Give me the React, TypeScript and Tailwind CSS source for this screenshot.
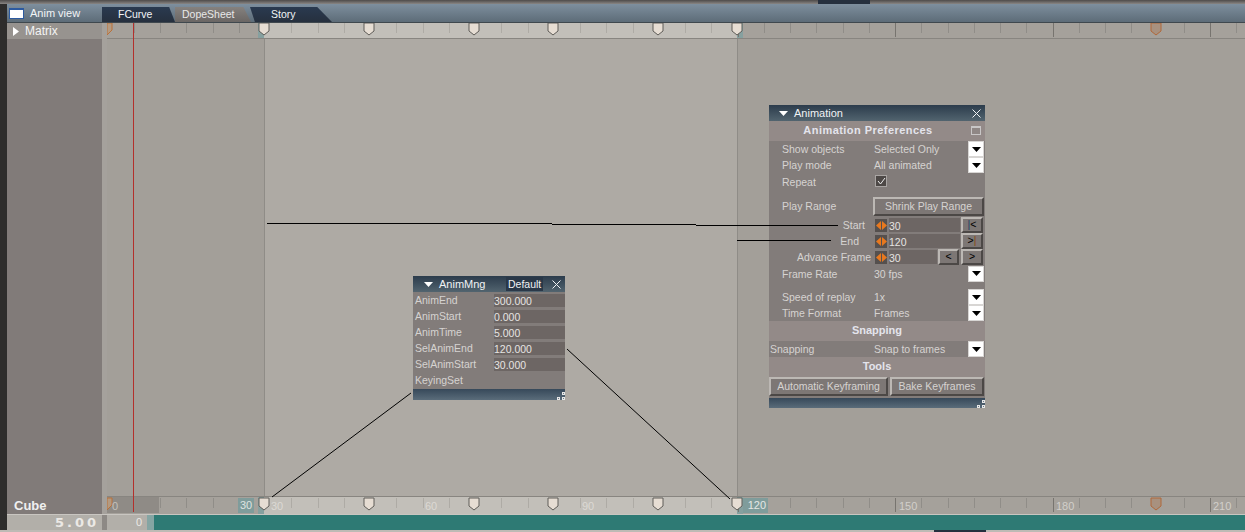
import React from "react";

const F = "[font-family:'Liberation_Sans',sans-serif]";

function Ruler({ bottom }: { bottom?: boolean }) {
  const ticks: number[] = [];
  for (let f = 5; f <= 225; f += 5) ticks.push(f);
  const keys = [264, 369, 474, 553, 658, 737];
  const X = (f: number) => Math.round(107.5 + 5.25 * f) - 107;
  const h = bottom ? 17 : 15;
  return (
    <div className={`relative flex shrink-0 ${bottom ? "h-[17px]" : "h-[15px]"}`}>
      <div className="w-[157px] bg-[#a5a19b]" />
      <div className="w-[473px] bg-[#c2bfb9]" />
      <div className="flex-1 bg-[#a5a19b]" />
      <svg className="absolute inset-0" width="1138" height={h} shapeRendering="crispEdges">
        {bottom && <rect x="0" y="0" width="52" height="16" fill="#8f8b86" />}
        <rect x="151" y="0" width="6" height={h} fill="#86a09f" />
        <rect x="630" y="0" width="6" height={h} fill="#86a09f" />
        {ticks.map((f) => {
          const inRange = f > 30 && f < 120;
          const major = f % 30 === 0 && !inRange;
          return (
            <line
              key={f}
              x1={X(f)}
              x2={X(f)}
              y1={bottom ? 1 : 0}
              y2={major && f > 30 ? (bottom ? 15 : 14) : bottom ? 11 : 10}
              stroke={inRange ? "#aeaba5" : major ? "#77746f" : "#908d88"}
            />
          );
        })}
        {keys.map((k) => (
          <path
            key={k}
            d={`M${k - 107 - 5} ${bottom ? 1 : 0}h10v8l-5 4l-5 -4z`}
            fill="#e6ddd3"
            stroke="#5f5c58"
            shapeRendering="auto"
          />
        ))}
        <path d={`M${1156 - 107 - 5} ${bottom ? 1 : 0}h10v8l-5 4l-5 -4z`} fill="#a8917f" stroke="#b0683a" shapeRendering="auto" />
        <path d={`M0 ${bottom ? 1 : 0}h5v7l-5 5z`} fill="#b49a80" stroke="#b8703a" shapeRendering="auto" />
      </svg>
      {bottom && (
        <>
          <span className="absolute left-[131px] top-[1px] w-[16px] h-[15px] bg-[#7f9c9b] text-center text-[#dfe3e0] text-[11px] leading-[15px]">30</span>
          <span className="absolute left-[5px] top-[2px] text-[#c4c0ba] text-[11px] leading-[15px]">0</span>
          <span className="absolute left-[164px] top-[2px] text-[#dcd9d4] text-[11px] leading-[15px]">30</span>
          <span className="absolute left-[318px] top-[2px] text-[#dcd9d4] text-[11px] leading-[15px]">60</span>
          <span className="absolute left-[475px] top-[2px] text-[#dcd9d4] text-[11px] leading-[15px]">90</span>
          <span className="absolute left-[636px] top-[1px] w-[25px] h-[15px] bg-[#7f9c9b] text-right pr-[2px] text-[#e4e7e4] text-[11px] leading-[15px]">120</span>
          <span className="absolute left-[792px] top-[2px] text-[#d2cfca] text-[11px] leading-[15px]">150</span>
          <span className="absolute left-[949px] top-[2px] text-[#d2cfca] text-[11px] leading-[15px]">180</span>
          <span className="absolute left-[1106px] top-[2px] text-[#d2cfca] text-[11px] leading-[15px]">210</span>
        </>
      )}
    </div>
  );
}

function Close() {
  return (
    <svg width="9" height="9" viewBox="0 0 9 9" className="shrink-0">
      <path d="M0.5 0.5L8.5 8.5M8.5 0.5L0.5 8.5" stroke="#f0f2f4" strokeWidth="1" />
    </svg>
  );
}

function Down({ color = "#fff" }: { color?: string }) {
  return (
    <svg width="9" height="5" viewBox="0 0 9 5" className="shrink-0">
      <path d="M0 0h9L4.5 5z" fill={color} />
    </svg>
  );
}

function Grip() {
  return (
    <svg width="8" height="8" viewBox="0 0 8 8" className="absolute right-0 bottom-0" shapeRendering="crispEdges">
      <path d="M5 0h3v3h-3zM0 5h3v3h-3zM5 5h3v3h-3z" fill="#e8e8e8" />
      <path d="M6 1h1v1h-1zM1 6h1v1h-1zM6 6h1v1h-1z" fill="#6a7a88" />
    </svg>
  );
}

function Drop() {
  return (
    <div className="w-[16px] h-[16px] bg-white border border-[#d8d6d4] flex items-center justify-center shrink-0">
      <Down color="#000" />
    </div>
  );
}

function Row({ label, value, drop, h = "h-[16px]", indent = "pl-[13px]" }: { label: string; value: string; drop?: boolean; h?: string; indent?: string }) {
  return (
    <div className={`flex items-center pr-[1px] ${h}`}>
      <span className={`w-[105px] shrink-0 pt-[2px] ${indent}`}>{label}</span>
      <span className="flex-1 pt-[2px]">{value}</span>
      {drop && <Drop />}
    </div>
  );
}

function Bevel({ className, children }: { className: string; children: React.ReactNode }) {
  return (
    <div
      className={`flex items-center justify-center border-2 border-t-[#bcb8b4] border-l-[#bcb8b4] border-b-[#4c4846] border-r-[#4c4846] bg-[#7d7775] text-[#d6d3d1] ${className}`}
    >
      {children}
    </div>
  );
}

function Spin({ label, value, fieldW, indentClass, children }: { label: string; value: string; fieldW: string; indentClass: string; children: React.ReactNode }) {
  return (
    <div className="flex items-center h-[16px]">
      <span className={`w-[106px] shrink-0 text-right pt-[2px] ${indentClass}`}>{label}</span>
      <div className="w-[12px] h-[13px] bg-[#55504e] flex items-center justify-center gap-[1px] shrink-0">
        <svg width="11" height="9" viewBox="0 0 11 9">
          <path d="M5 0v9L0 4.5zM6 0v9l5-4.5z" fill="#e8781e" />
        </svg>
      </div>
      <div className={`ml-[2px] h-[14px] bg-[#6d6664] text-[#e6e4e2] leading-[16px] ${fieldW}`}>{value}</div>
      {children}
    </div>
  );
}

function Section({ label, className = "", children }: { label: string; className?: string; children?: React.ReactNode }) {
  return (
    <div className={`relative h-[20px] pb-[1px] bg-[#938a88] flex items-center justify-center font-bold text-[11px] text-[#e4e4ec] ${className}`}>
      {label}
      {children}
    </div>
  );
}

function AnimationWindow() {
  return (
    <div className="absolute left-[769px] top-[105px] w-[216px] h-[303px] bg-[#827c7a] text-[#d6d3d1] text-[10.5px] flex flex-col">
      <div className="h-[16px] flex items-center bg-gradient-to-b from-[#2c3c4c] to-[#52646f] text-[#f0f2f4] pl-[10px] pr-[4px] text-[11px]">
        <Down />
        <span className="ml-[6px] flex-1">Animation</span>
        <Close />
      </div>
      <Section label="Animation Preferences" className="pr-[18px] tracking-[0.45px]">
        <div className="absolute left-[202px] top-[5px] w-[10px] h-[9px] border border-[#c8c6c6] border-t-2 bg-[#8f8785]" />
      </Section>
      <Row label="Show objects" value="Selected Only" drop />
      <Row label="Play mode" value="All animated" drop />
      <div className="flex items-center h-[17px]">
        <span className="w-[106px] pl-[13px] pt-[2px] shrink-0">Repeat</span>
        <div className="w-[12px] h-[12px] -mt-[1px] bg-[#4d4846] border border-[#a9a5a3] flex items-center justify-center">
          <svg width="9" height="8" viewBox="0 0 9 8">
            <path d="M1 4l2.5 3L8 1" fill="none" stroke="#eee" />
          </svg>
        </div>
      </div>
      <div className="flex items-center h-[19px] mt-[7px]">
        <span className="w-[104px] pl-[13px] shrink-0">Play Range</span>
        <Bevel className="w-[111px] h-[19px]">Shrink Play Range</Bevel>
      </div>
      <div className="mt-[1px]" />
      <Spin label="Start" value="30" fieldW="w-[71px]" indentClass="pr-[10px]">
        <Bevel className="ml-[1px] w-[22px] h-[16px] !text-black"><span className="text-[#1d3f66]">|</span>&lt;</Bevel>
      </Spin>
      <Spin label="End" value="120" fieldW="w-[71px]" indentClass="pr-[16px]">
        <Bevel className="ml-[1px] w-[22px] h-[16px] !text-black">&gt;<span className="text-[#8a4a14]">|</span></Bevel>
      </Spin>
      <Spin label="Advance Frame" value="30" fieldW="w-[48px]" indentClass="pr-[4px]">
        <Bevel className="ml-[1px] w-[21px] h-[16px] !text-black">&lt;</Bevel>
        <Bevel className="ml-[2px] w-[22px] h-[16px] !text-black">&gt;</Bevel>
      </Spin>
      <Row label="Frame Rate" value="30 fps" drop h="h-[17px]" />
      <div className="h-[7px]" />
      <Row label="Speed of replay" value="1x" drop />
      <Row label="Time Format" value="Frames" drop />
      <Section label="Snapping" />
      <Row label="Snapping" value="Snap to frames" drop indent="pl-[1px]" />
      <Section label="Tools" />
      <div className="flex h-[19px] gap-[2px] pr-[1px]">
        <Bevel className="w-[119px] h-[19px]">Automatic Keyframing</Bevel>
        <Bevel className="w-[94px] h-[19px]">Bake Keyframes</Bevel>
      </div>
      <div className="relative mt-auto h-[10px] bg-gradient-to-b from-[#37495a] to-[#5a6c7a]">
        <Grip />
      </div>
    </div>
  );
}

function MngRow({ label, value }: { label: string; value: string }) {
  return (
    <div className="flex items-center h-[16px]">
      <span className="w-[81px] pl-[2px] pt-[2px] shrink-0">{label}</span>
      <div className="flex-1 h-[13px] bg-[#6d6664] text-[#e6e4e2] leading-[14px]">{value}</div>
    </div>
  );
}

function AnimMngWindow() {
  return (
    <div className="absolute left-[413px] top-[276px] w-[152px] h-[124px] bg-[#827c7a] text-[#d6d3d1] text-[10.5px] flex flex-col">
      <div className="h-[16px] flex items-center bg-gradient-to-b from-[#2c3c4c] to-[#52646f] text-[#f0f2f4] pl-[11px] text-[11px]">
        <Down />
        <span className="ml-[6px] w-[67px]">AnimMng</span>
        <span className="h-[14px] leading-[14px] px-[2px] bg-[#2a3848] text-[10.5px]">Default</span>
        <span className="ml-[9px]">
          <Close />
        </span>
      </div>
      <MngRow label="AnimEnd" value="300.000" />
      <MngRow label="AnimStart" value="0.000" />
      <MngRow label="AnimTime" value="5.000" />
      <MngRow label="SelAnimEnd" value="120.000" />
      <MngRow label="SelAnimStart" value="30.000" />
      <div className="flex items-center h-[16px] pl-[2px] pt-[2px]">KeyingSet</div>
      <div className="relative mt-auto h-[11px] bg-gradient-to-b from-[#37495a] to-[#5a6c7a]">
        <Grip />
      </div>
    </div>
  );
}

function Tab({ label, className, text }: { label: string; className: string; text: string }) {
  return (
    <div className={`h-[15px] flex items-center text-[10.5px] ${className} ${text}`}>{label}</div>
  );
}

export default function App() {
  return (
    <div className={`relative w-[1245px] h-[532px] overflow-hidden bg-[#9a9692] flex flex-col ${F}`}>
      <div className="relative h-[4px] shrink-0 bg-gradient-to-b from-[#4e4b4a] to-[#8a8785]">
        <div className="absolute left-[818px] top-0 w-[52px] h-[4px] bg-[#26303e]" />
      </div>
      <div className="flex flex-1 min-h-0">
        <div className="w-[7px] shrink-0 bg-[#2e2d2c]" />
        <div className="flex-1 min-w-0 flex flex-col">
          {/* header */}
          <div className="h-[19px] shrink-0 flex items-end bg-gradient-to-b from-[#7e8f9e] to-[#5d6c78] border-b border-[#3f484e]">
            <div className="w-[95px] shrink-0 self-center flex items-center pl-[2px]">
              <div className="w-[15px] h-[11px] bg-white border-t-2 border-x border-b border-[#2c5aa0]" />
              <span className="ml-[6px] text-[11px] text-[#f2f4f6]">Anim view</span>
            </div>
            <Tab
              label="FCurve"
              text="text-[#f2f4f6]"
              className="w-[73px] pl-[16px] bg-gradient-to-b from-[#2a3a50] to-[#26303e] [clip-path:polygon(0_0,92%_0,100%_100%,0_100%)]"
            />
            <Tab
              label="DopeSheet"
              text="text-[#e8e8e8]"
              className="w-[76px] pl-[7px] bg-gradient-to-b from-[#85817e] to-[#6a6664] [clip-path:polygon(0_0,90%_0,100%_100%,0_100%)]"
            />
            <Tab
              label="Story"
              text="text-[#f2f4f6]"
              className="-ml-[1px] w-[82px] pl-[21px] bg-gradient-to-b from-[#2a3a50] to-[#26303e] [clip-path:polygon(0_0,82%_0,100%_100%,6%_100%)]"
            />
          </div>
          {/* main */}
          <div className="flex flex-1 min-h-0">
            <div className="w-[95px] shrink-0 flex flex-col bg-[#817b79]">
              <div className="h-[16px] shrink-0 bg-[#97938f] flex items-center text-[12px] text-[#f4f4f4]">
                <svg width="7" height="9" viewBox="0 0 7 9" className="ml-[6px] mr-[5px]">
                  <path d="M0 0l6 4.5L0 9z" fill="#fff" />
                </svg>
                Matrix
              </div>
              <div className="flex-1" />
              <div className="h-[19px] shrink-0 pl-[7px] pt-[1px] text-[13px] font-bold text-[#f0f0f0] leading-[19px]">Cube</div>
            </div>
            <div className="w-[5px] shrink-0 bg-[#a5a19c]" />
            <div className="flex-1 min-w-0 flex flex-col">
              <Ruler />
              <div className="h-px shrink-0 bg-[#888580]" />
              <div className="flex flex-1 min-h-0">
                <div className="w-[157px] bg-[#a39f99]" />
                <div className="w-px bg-[#8f8c87]" />
                <div className="w-[472px] bg-[#aeaaa4]" />
                <div className="w-px bg-[#8f8c87]" />
                <div className="flex-1 bg-[#a39f99]" />
              </div>
              <div className="h-px shrink-0 bg-[#888580]" />
              <Ruler bottom />
            </div>
          </div>
          {/* footer */}
          <div className="h-[16px] shrink-0 flex border-t border-[#c9c6c1] text-[#ebe9e5]">
            <div className="w-[95px] shrink-0 bg-[#b2afa9] text-right pr-[3px] text-[13px] font-bold tracking-[3px] leading-[15px] [font-family:'DejaVu_Sans',sans-serif]">5.00</div>
            <div className="w-[5px] shrink-0 bg-[#8d8985]" />
            <div className="w-[40px] shrink-0 bg-[#b2afa9] text-right pr-[5px] text-[11px] leading-[15px]">0</div>
            <div className="w-[7px] shrink-0 bg-[#85a5a3]" />
            <div className="flex-1 bg-[#2e7a74]" />
          </div>
        </div>
      </div>
      <div className="relative h-[2px] shrink-0 bg-[#bdbab5]">
        <div className="absolute left-[934px] top-0 w-[52px] h-[2px] bg-[#26303e]" />
      </div>

      {/* red playhead */}
      <div className="absolute left-[133px] top-[23px] w-px h-[489px] bg-[#b3302c]" />

      <AnimMngWindow />
      <AnimationWindow />

      {/* connection wires */}
      <svg className="absolute inset-0 pointer-events-none" width="1245" height="532">
        <g stroke="#000" fill="none" strokeWidth="1" shapeRendering="crispEdges">
          <path d="M267 223L552 224L838 226" />
          <path d="M737 241L832 240" />
        </g>
        <g stroke="#000" fill="none" strokeWidth="1">
          <path d="M411 393L272 497" />
          <path d="M567 349L730 499" />
        </g>
      </svg>
    </div>
  );
}
